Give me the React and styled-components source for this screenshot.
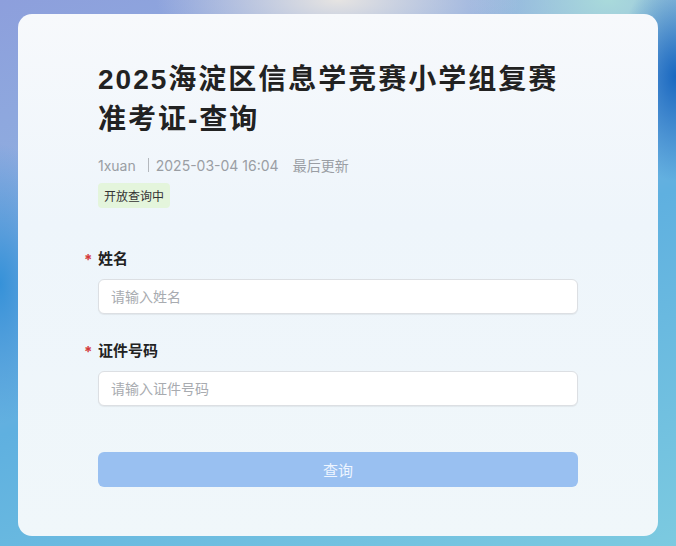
import React from "react";
import styled, { createGlobalStyle } from "styled-components";

const GlobalStyle = createGlobalStyle`
  html, body {
    margin: 0;
    padding: 0;
  }
  body {
    font-family: Inter, "Noto Sans CJK SC", sans-serif;
  }
`;

const Page = styled.div`
  width: 676px;
  height: 546px;
  box-sizing: border-box;
  padding: 14px 18px 10px 18px;
  overflow: hidden;
  background:
    radial-gradient(ellipse 90px 200px at 0% 52%, rgba(40, 140, 215, 0.85), transparent 70%),
    radial-gradient(ellipse 80px 140px at 100% 14%, rgba(20, 100, 190, 0.95), transparent 75%),
    radial-gradient(ellipse 260px 90px at 50% 0%, #e6e4e2, transparent 70%),
    radial-gradient(ellipse 200px 120px at 90% 0%, #a9dadb, transparent 70%),
    linear-gradient(160deg, #8d9fdc 0%, #8fb0e0 30%, #5fb0e0 55%, #7ccae0 100%);
`;

const Card = styled.div`
  height: 100%;
  box-sizing: border-box;
  border-radius: 14px;
  background: linear-gradient(180deg, #f7f9fc 0%, #eef5fb 40%, #f0f7fa 100%);
  padding: 46px 80px 0 80px;
  display: flex;
  flex-direction: column;
`;

const Title = styled.h1`
  margin: 0;
  font-family: "Liberation Sans", "Noto Sans CJK SC", sans-serif;
  font-size: 28px;
  line-height: 40px;
  font-weight: 700;
  color: #222;
  letter-spacing: 2px;
`;

const Meta = styled.div`
  margin-top: 15px;
  font-size: 14px;
  color: #9a9ea4;
  display: flex;
  align-items: center;
`;

const Divider = styled.span`
  width: 1px;
  height: 14px;
  background: #b4b8bd;
  margin: 0 7px 0 12px;
`;

const Updated = styled.span`
  margin-left: 14px;
`;

const Tag = styled.span`
  align-self: flex-start;
  margin-top: 8px;
  padding: 4px 6px;
  border-radius: 4px;
  font-size: 12px;
  color: #333;
  background: #e4f5dc;
`;

const Form = styled.form`
  margin-top: 41px;
  display: flex;
  flex-direction: column;
`;

const Field = styled.div`
  margin-bottom: 27px;
`;

const Label = styled.label`
  display: block;
  position: relative;
  font-size: 15px;
  font-weight: 700;
  color: #222;
  line-height: 20px;
  margin-bottom: 10px;
  &::before {
    content: "*";
    position: absolute;
    left: -14px;
    top: 1px;
    color: #d43a3a;
    font-size: 15px;
  }
`;

const Input = styled.input`
  display: block;
  width: 100%;
  box-sizing: border-box;
  height: 35px;
  border: 1px solid #dcdfe3;
  border-radius: 6px;
  background: #fff;
  padding: 0 12px;
  font-size: 14px;
  font-family: inherit;
  box-shadow: 0 1px 1px rgba(0, 0, 0, 0.06);
  outline: none;
  &::placeholder {
    color: #a8abb0;
  }
`;

const Button = styled.button`
  margin-top: 19px;
  height: 35px;
  border: none;
  border-radius: 6px;
  background: #99c0f1;
  color: #eef5ff;
  font-size: 15px;
  font-family: inherit;
`;

const fields = [
  { label: "姓名", placeholder: "请输入姓名" },
  { label: "证件号码", placeholder: "请输入证件号码" },
];

const App = () => {
  return (
    <>
      <GlobalStyle />
      <Page>
        <Card>
          <Title>
            2025海淀区信息学竞赛小学组复赛
            <br />
            准考证-查询
          </Title>
          <Meta>
            <span>1xuan</span>
            <Divider />
            <span>2025-03-04 16:04</span>
            <Updated>最后更新</Updated>
          </Meta>
          <Tag>开放查询中</Tag>
          <Form onSubmit={(e) => e.preventDefault()}>
            {fields.map((f) => (
              <Field key={f.label}>
                <Label>{f.label}</Label>
                <Input placeholder={f.placeholder} />
              </Field>
            ))}
            <Button type="submit">查询</Button>
          </Form>
        </Card>
      </Page>
    </>
  );
};

export default App;
